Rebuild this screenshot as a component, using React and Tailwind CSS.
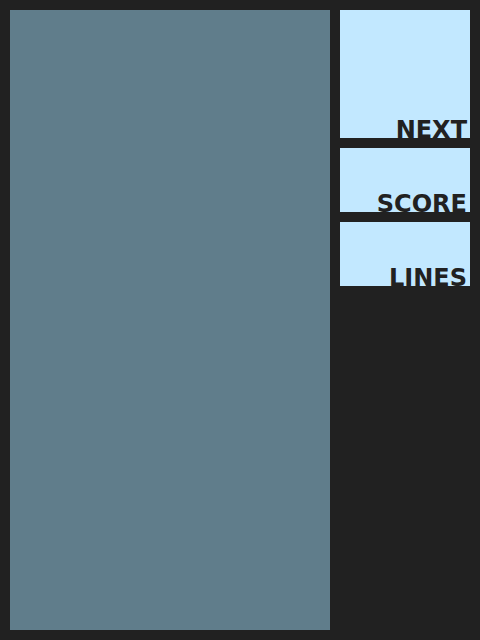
export default function App() {
  const label = "text-[24px] leading-none font-bold text-[#212121] mb-[-4px]";
  return (
    <div className="w-[480px] h-[640px] bg-[#212121] p-[10px] flex gap-[10px]" style={{ fontFamily: '"DejaVu Sans", sans-serif' }}>
      <div className="w-[320px] h-[620px] bg-[#607d8b]" />
      <div className="w-[130px] flex flex-col gap-[10px]">
        <div className="h-[128px] bg-[#c2e8ff] flex items-end justify-end pr-[3px]">
          <span className={label}>NEXT</span>
        </div>
        <div className="h-[64px] bg-[#c2e8ff] flex items-end justify-end pr-[3px]">
          <span className={label}>SCORE</span>
        </div>
        <div className="h-[64px] bg-[#c2e8ff] flex items-end justify-end pr-[3px]">
          <span className={label}>LINES</span>
        </div>
      </div>
    </div>
  );
}
